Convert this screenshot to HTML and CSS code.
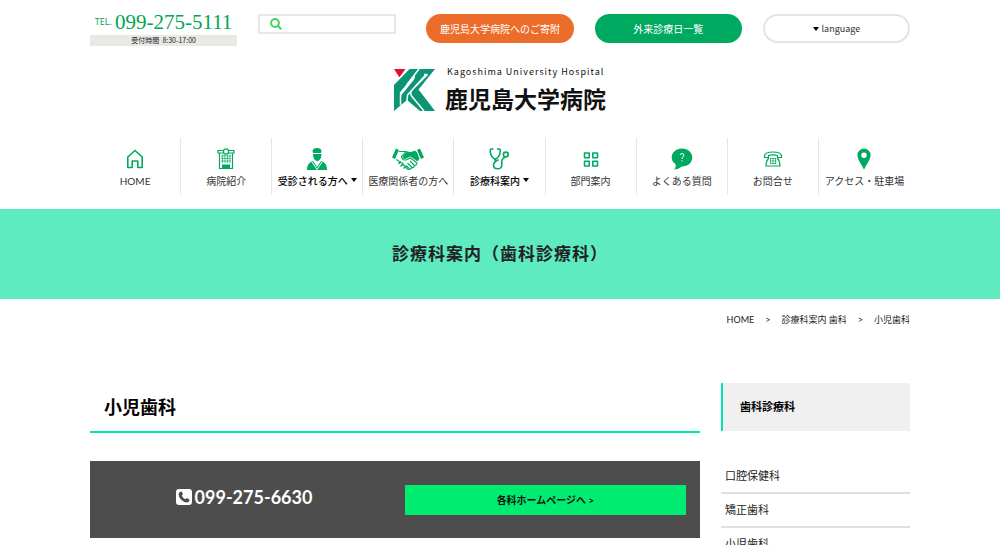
FILE: index.html
```html
<!DOCTYPE html>
<html lang="ja">
<head>
<meta charset="utf-8">
<meta name="viewport" content="width=device-width, initial-scale=1">
<title>小児歯科 | 鹿児島大学病院</title>
<link rel="stylesheet" href="styles.css">
</head>
<body>
<header class="wrap">
  <div class="topbar">
    <div class="tel">
      <p class="tel-line"><span class="tel-label">TEL.</span><span class="tel-number">099-275-5111</span></p>
      <p class="tel-hours">受付時間&nbsp; 8:30-17:00</p>
    </div>
    <form class="search" role="search">
      <svg class="search-icon" viewBox="0 0 12 12" aria-hidden="true"><circle cx="5" cy="5" r="3.9"/><path d="M7.8 7.8 11.2 11.2"/></svg>
      <input class="search-input" type="search" aria-label="サイト内検索">
    </form>
    <a class="pill pill-orange" href="#">鹿児島大学病院へのご寄附</a>
    <a class="pill pill-green" href="#">外来診療日一覧</a>
    <button class="pill pill-outline" type="button"><span class="caret"></span>language</button>
  </div>

  <a class="logo" href="#">
    <svg class="logo-mark" viewBox="0 0 41 42" aria-hidden="true">
      <path fill="#e2112f" d="M0 0H11.500L5.500 8.500Z"/>
      <path fill="#0a9574" d="M0 15 14.500 0H41L24.500 20.500 41 42H26L13 31 0 42Z"/>
      <path fill="#fff" d="M0 9H5L12 0H15.500L0 16Z"/>
      <path fill="none" stroke="#fff" stroke-width="1.500" stroke-linejoin="round" d="M6 24.500 19.500 8Q21 6.500 19.500 10L6.500 26V36M25 0 13 15.500M33.500 5.500 18 21Q15.500 24 18 27.500L30 42M32 5.500 13.500 26 13 32M33.500 5.500H30"/>
    </svg>
    <span class="logo-text">
      <span class="logo-en">Kagoshima University Hospital</span>
      <span class="logo-ja">鹿児島大学病院</span>
    </span>
  </a>

  <nav class="nav">
    <a class="nav-item" href="#">
      <svg class="nav-icon" viewBox="0 0 32 24" aria-hidden="true"><path class="line" d="M8.800 10 16 3.500 23.200 10V20.500H18.800V14H13.200V20.500H8.800Z"/></svg>
      <span>HOME</span></a>
    <a class="nav-item" href="#">
      <svg class="nav-icon" viewBox="0 0 32 24" aria-hidden="true"><path class="thin" d="M9.500 6V21.500H22.500V6M8 3.500H24V6H8Z"/><path class="grid" d="M11 9H21M11 11.500H21M11 14H21M12.500 7.500V16M15 7.500V16M17.500 7.500V16M20 7.500V16"/><path class="solid" d="M12 17.500H20V21.500H12Z"/><circle cx="16" cy="4.500" r="2.600" fill="#fff" stroke="#00a960" stroke-width="1.300"/></svg>
      <span>病院紹介</span></a>
    <a class="nav-item nav-strong" href="#">
      <svg class="nav-icon" viewBox="0 0 32 24" aria-hidden="true"><path class="solid" d="M11.500 4Q12 1 16 1T20.500 4L20 6H12ZM12 7H20.500Q20.500 13 16.200 14.200 12 13 12 7ZM12 14 16 20 20 14Q26 15.500 26 23H6Q6 15.500 12 14Z"/><path d="M11 15 16 22.500 21 15" fill="none" stroke="#fff" stroke-width="1"/></svg>
      <span>受診される方へ<span class="caret caret-after"></span></span></a>
    <a class="nav-item" href="#">
      <svg class="nav-icon" viewBox="0 0 32 24" aria-hidden="true"><path class="solid" d="M4 1.500 7 3 3 12 0 10.500ZM28 1.500 25 3 29 12 32 10.500ZM10.500 9.500 15 4.500 19 5 23 3.500 25 5.500 27.500 11.500 25.500 14.500 18.500 9.500 13 12Q10.500 12 10.500 9.500Z"/><path d="M7 4.500H14L9.500 9.500Q10 13.500 14 13L18.500 11 25 16Q25 18 23 18.500 22 21 19.500 21 17 23.500 14.500 21.500 14 18.500 11.500 18.500 11 15.500 8.500 15.500L4.500 12.500" fill="none" stroke="#00a960" stroke-width="1.100"/><path class="line" d="M7 16.500 8.500 15M9 19 11 17M12 21 13.500 19.500"/><path class="thin" d="M18 14 22.500 18.500M15.500 16 20 20.500M14 18.500 17 21.500"/></svg>
      <span>医療関係者の方へ</span></a>
    <a class="nav-item nav-strong" href="#">
      <svg class="nav-icon" viewBox="0 0 32 24" aria-hidden="true"><path class="line" d="M10 2H8.200Q7 2 7.300 5 7.800 10 12.200 12.500 16.700 10 17.200 5 17.500 2 16.300 2H14.500"/><path class="line" d="M12.200 12V14M15 13Q10.500 15.500 10.500 18 10.500 21.800 14.500 21.800 19 21.800 18.800 17.500 18.200 11.500 21.500 10.500"/><circle class="line" cx="22.800" cy="7.500" r="2.400"/></svg>
      <span>診療科案内<span class="caret caret-after"></span></span></a>
    <a class="nav-item" href="#">
      <svg class="nav-icon" viewBox="0 0 32 24" aria-hidden="true"><path class="line" d="M9.500 6H14.200V10.700H9.500ZM17.800 6H22.500V10.700H17.800ZM9.500 14.300H14.200V19H9.500ZM17.800 14.300H22.500V19H17.800Z"/></svg>
      <span>部門案内</span></a>
    <a class="nav-item" href="#">
      <svg class="nav-icon" viewBox="0 0 32 24" aria-hidden="true"><path class="solid" d="M16 1.500C22 1.500 26.300 5.500 26.300 10.500S22 19.500 16 19.500Q13 22 8 22.500 10.500 20 9.500 17 5.700 14.500 5.700 10.500C5.700 5.500 10 1.500 16 1.500Z"/><path d="M14.200 8Q14.200 6.500 16 6.500T17.800 8Q17.800 9.200 16.800 10 16 10.500 16 12M16 13.200V14.500" fill="none" stroke="#fff" stroke-width="1"/></svg>
      <span>よくある質問</span></a>
    <a class="nav-item" href="#">
      <svg class="nav-icon" viewBox="0 0 32 24" aria-hidden="true"><path class="thin" d="M7.500 10.500V8.500Q8.500 5 16 5T24.500 8.500V10.500H20.500V8.500Q16 7.300 11.500 8.500V10.500ZM12 10.500Q9 14 9 19H23Q23 14 20 10.500"/><path class="grid" d="M13 11.500H19M13 14H19.500M13 16.500H19.500M13.500 11V17M16 11V17M18.500 11V17"/></svg>
      <span>お問合せ</span></a>
    <a class="nav-item" href="#">
      <svg class="nav-icon" viewBox="0 0 32 24" aria-hidden="true"><path class="solid" fill-rule="evenodd" d="M16 1.500A6.600 6.600 0 0 1 22.600 8.100C22.600 13 18 18 16 22.800 14 18 9.400 13 9.400 8.100A6.600 6.600 0 0 1 16 1.500ZM16 5.600A2.700 2.700 0 1 0 16 11 2.700 2.700 0 0 0 16 5.600Z"/></svg>
      <span>アクセス・駐車場</span></a>
  </nav>
</header>

<div class="banner"><h1 class="banner-title">診療科案内（歯科診療科）</h1></div>

<div class="wrap">
  <nav class="crumbs" aria-label="パンくず">
    <a href="#">HOME</a><span>&gt;</span><a href="#">診療科案内 歯科</a><span>&gt;</span><span>小児歯科</span>
  </nav>
  <div class="columns">
    <main class="main">
      <h2 class="title">小児歯科</h2>
      <section class="contact">
        <p class="phone">
          <svg class="phone-icon" viewBox="0 0 16 16" aria-hidden="true"><rect width="16" height="16" rx="3" fill="#fff"/><path fill="#4d4d4d" d="M4.500 2.700 5.700 2.500 7 5.200 5.700 6.500Q6.700 9 9.400 10.300L10.800 9 13.400 10.400Q13.500 13.300 10.900 13.400 7.500 13.300 4.900 10.500 2.500 7.700 2.600 5 2.900 3.200 4.500 2.700Z"/></svg>
          <span>099-275-6630</span>
        </p>
        <a class="site-link" href="#">各科ホームページへ &gt;</a>
      </section>
    </main>
    <aside class="side">
      <h3 class="side-title">歯科診療科</h3>
      <ul class="side-list">
        <li><a href="#">口腔保健科</a></li>
        <li><a href="#">矯正歯科</a></li>
        <li><a href="#">小児歯科</a></li>
      </ul>
    </aside>
  </div>
</div>
</body>
</html>
```

FILE: styles.css
```css
* { box-sizing: border-box; }

body {
  margin: 0;
  background: #fff;
  color: #222;
  font-family: Lato, "Noto Sans CJK JP", sans-serif;
  font-size: 10px;
  line-height: 16px;
}

h1, h2, h3, p, ul { margin: 0; padding: 0; }
ul { list-style: none; }
a { color: inherit; text-decoration: none; }

.wrap { width: 82%; margin: 0 auto; }

/* Top bar */
.topbar {
  display: grid;
  grid-template-columns: repeat(5, minmax(0, 1fr));
  gap: 21px;
  align-items: start;
  padding-top: 14px;
}

.tel-line {
  display: flex;
  justify-content: center;
  gap: 3px;
  margin-bottom: 5px;
  color: #00a651;
  line-height: 16px;
  white-space: nowrap;
}
.tel-label { font-family: "Noto Sans", sans-serif; font-size: 9px; }
.tel-number { font-family: "Liberation Serif", serif; font-size: 21px; }
.tel-hours {
  background: #e8e8e4;
  font-family: "Noto Sans CJK JP", sans-serif;
  font-size: 7px;
  line-height: 11px;
  text-align: center;
}

.search {
  display: flex;
  align-items: center;
  height: 20px;
  margin-right: 9px;
  padding: 0 10px;
  border: 2px solid #e8e8e4;
}
.search-icon {
  flex: none;
  width: 12px;
  height: 12px;
  fill: none;
  stroke: #3fd65c;
  stroke-width: 2;
}
.search-input {
  flex: 1;
  min-width: 0;
  height: 16px;
  padding: 0 4px;
  border: 0;
  outline: 0;
  background: none;
  font: inherit;
}

.pill {
  display: flex;
  justify-content: center;
  align-items: center;
  height: 29px;
  padding: 0;
  border: 0;
  border-radius: 15px;
  color: #fff;
  font-family: "Noto Sans CJK JP", sans-serif;
  font-size: 10px;
  white-space: nowrap;
}
.pill-orange { background: #ec6c2a; }
.pill-green { background: #00a960; }
.pill-outline { gap: 3px; background: #fff; border: 2px solid #e4e4e0; color: #333; font-size: 9px; }

.caret {
  display: inline-block;
  border: 3px solid transparent;
  border-top: 4px solid #000;
  border-bottom: 0;
}
.caret-after { margin-left: 3px; vertical-align: 3px; }

/* Logo */
.logo {
  display: flex;
  justify-content: center;
  gap: 10px;
  width: max-content;
  margin: 20px auto 0;
  color: #111;
}
.logo-mark { width: 41px; height: 42px; margin-top: 3px; }
.logo-text { display: flex; flex-direction: column; }
.logo-en {
  padding-left: 2px;
  font-family: "Noto Sans CJK JP", sans-serif;
  font-size: 9px;
  line-height: 12px;
  letter-spacing: 1px;
}
.logo-ja {
  font-family: "Noto Sans CJK JP", sans-serif;
  font-size: 23px;
  font-weight: 700;
  line-height: 40px;
}

/* Global navigation */
.nav { display: grid; grid-template-columns: repeat(9, minmax(0, 1fr)); margin-top: 20px; }
.nav-item {
  display: flex;
  flex-direction: column;
  align-items: center;
  height: 57px;
  padding-top: 9px;
  border-right: 1px solid #e6e6e6;
  color: #333;
  white-space: nowrap;
}
.nav-item:last-child { border-right: 0; }
.nav-strong { color: #000; font-weight: 500; }
.nav-icon { width: 32px; height: 24px; margin-bottom: 2px; }
.nav-icon .line { fill: none; stroke: #00a960; stroke-width: 1.6; stroke-linejoin: round; stroke-linecap: round; }
.nav-icon .thin { fill: none; stroke: #00a960; stroke-width: 1.2; }
.nav-icon .grid { fill: none; stroke: #00a960; stroke-width: 0.7; }
.nav-icon .solid { fill: #00a960; }

/* Page banner */
.banner {
  margin-top: 14px;
  padding: 33px 0;
  background: #5eebc0;
  text-align: center;
}
.banner-title { font-size: 17px; line-height: 24px; letter-spacing: 1px; }

.crumbs {
  display: flex;
  justify-content: flex-end;
  gap: 11px;
  padding-top: 13px;
  font-size: 9px;
}

/* Content */
.columns {
  display: grid;
  grid-template-columns: 610fr 189fr;
  gap: 21px;
  align-items: start;
  margin-top: 55px;
}
.title {
  padding: 12px 14px;
  border-bottom: 2px solid #00e6b0;
  color: #000;
  font-size: 18px;
  line-height: 24px;
}
.contact {
  display: grid;
  grid-template-columns: 1fr 281px;
  align-items: start;
  margin-top: 28px;
  padding: 24px 14px 23px 0;
  background: #4d4d4d;
}
.phone {
  display: flex;
  justify-content: center;
  align-items: center;
  gap: 3px;
  padding-right: 7px;
  color: #fff;
  font-size: 18px;
  font-weight: 700;
  line-height: 24px;
}
.phone-icon { width: 16px; height: 16px; }
.site-link {
  background: #00ec70;
  color: #111;
  font-weight: 700;
  line-height: 30px;
  text-align: center;
}

.side-title {
  padding: 16px 17px;
  border-left: 2px solid #00e6b0;
  background: #f0f0f0;
  color: #000;
  font-size: 11px;
  line-height: 16px;
}
.side-list { margin-top: 29px; font-size: 11px; }
.side-list a {
  display: block;
  padding: 8px 4px;
  border-bottom: 2px solid #e0e0e0;
}
```
